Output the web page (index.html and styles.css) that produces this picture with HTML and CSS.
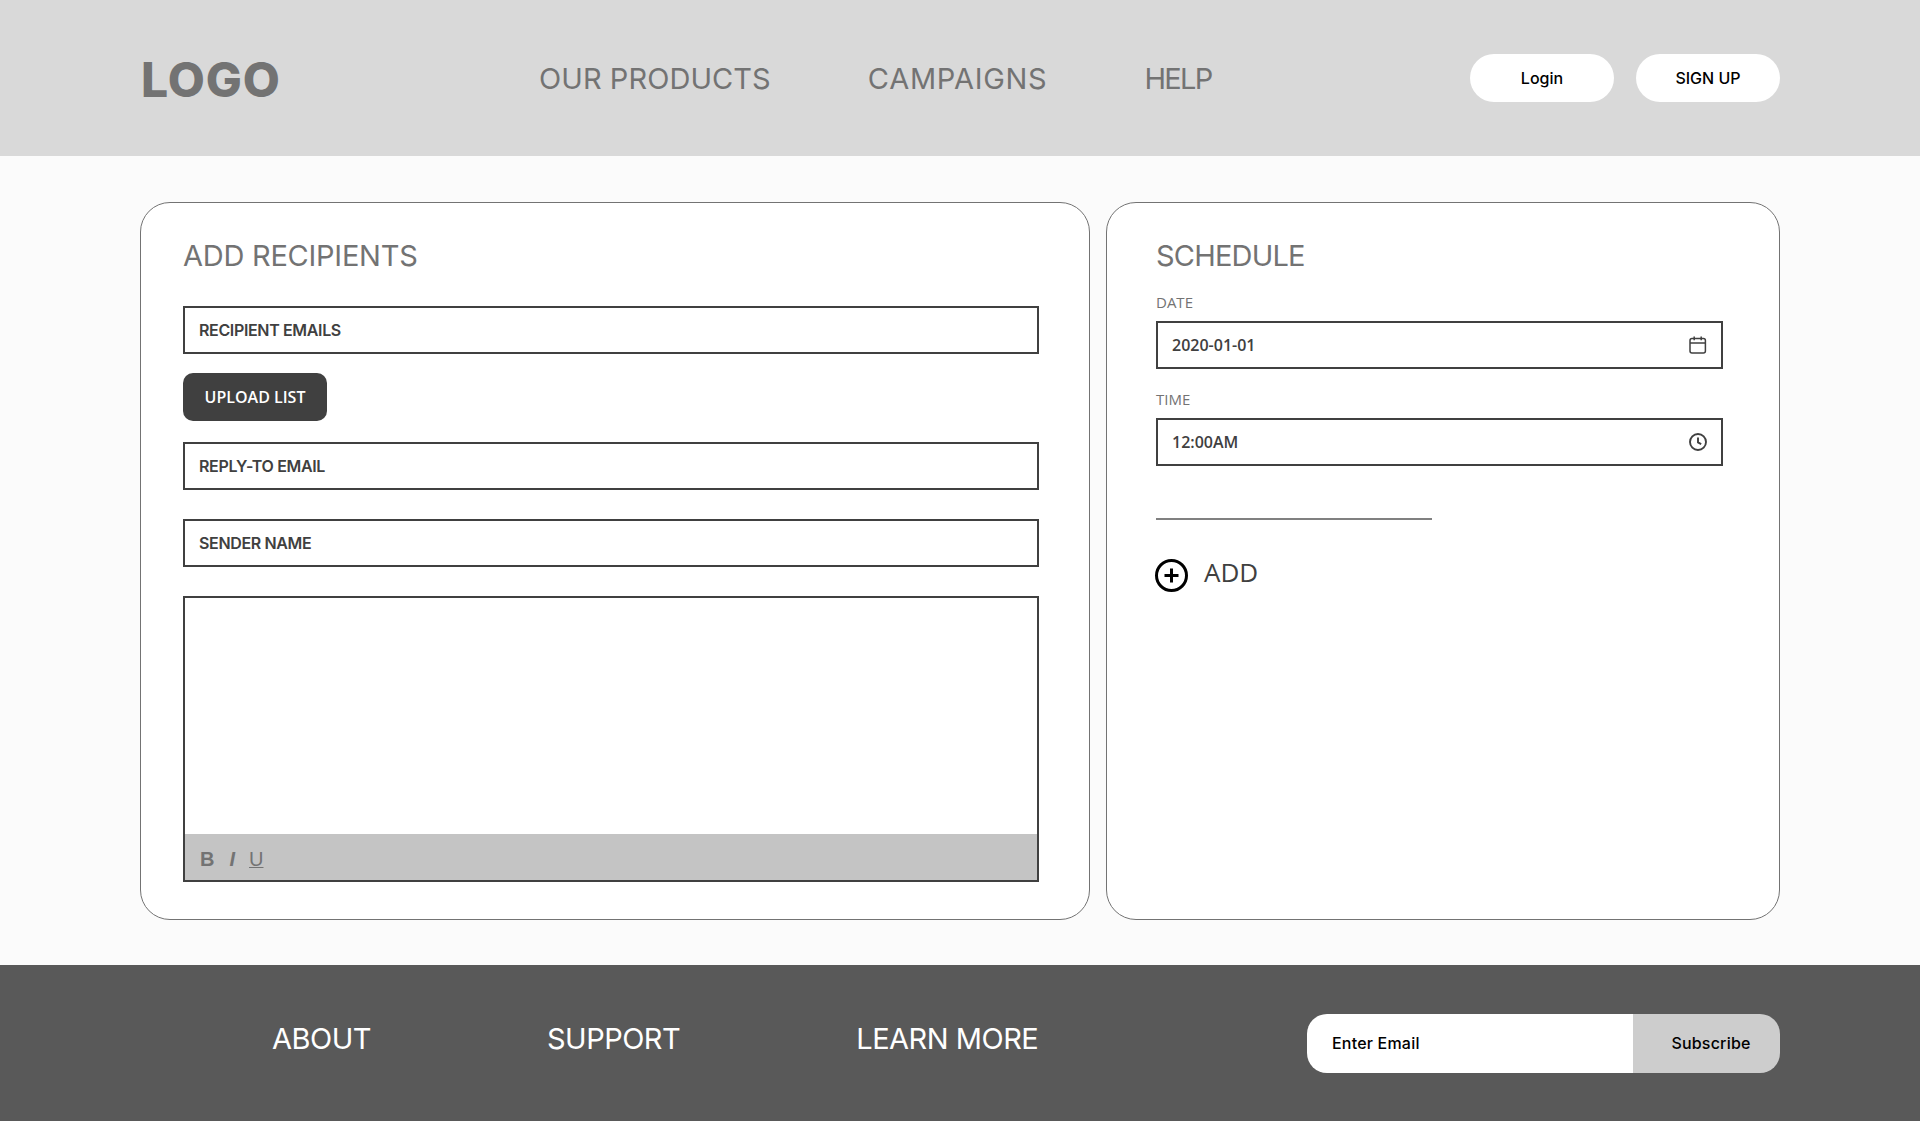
FILE: index.html
```html
<!DOCTYPE html>
<html lang="en">
<head>
  <meta charset="UTF-8" />
  <title>New Campaign</title>
  <link rel="stylesheet" href="styles.css">
</head>
<body>
  <header class="site-header">
    <div class="logo">LOGO</div>
    <nav class="main-nav">
      <a href="#" class="nav-products">OUR PRODUCTS</a>
      <a href="#" class="nav-campaigns">CAMPAIGNS</a>
      <a href="#" class="nav-help">HELP</a>
    </nav>
    <div class="header-buttons">
      <button type="button">Login</button>
      <button type="button">SIGN UP</button>
    </div>
  </header>

  <main class="content">
    <section class="card card-recipients">
      <h2>ADD RECIPIENTS</h2>
      <div class="field field-first">RECIPIENT EMAILS</div>
      <button type="button" class="upload-btn">UPLOAD LIST</button>
      <div class="field field-reply">REPLY-TO EMAIL</div>
      <div class="field field-spaced">SENDER NAME</div>
      <div class="editor field-spaced">
        <div class="editor-body"></div>
        <div class="editor-toolbar">
          <span class="tool-bold">B</span>
          <span class="tool-italic">I</span>
          <span class="tool-underline">U</span>
        </div>
      </div>
    </section>

    <section class="card card-schedule">
      <h2>SCHEDULE</h2>
      <label class="small-label label-date">DATE</label>
      <div class="value-field">
        <span>2020-01-01</span>
        <svg class="field-icon" viewBox="0 0 18 18" fill="none" stroke="#404040" stroke-width="1.5">
          <rect x="1" y="2.6" width="15.4" height="14.4" rx="2" />
          <path d="M1 7h15.4M5.2 0.6v3.6M12.2 0.6v3.6" />
        </svg>
      </div>
      <label class="small-label label-time">TIME</label>
      <div class="value-field">
        <span>12:00AM</span>
        <svg class="field-icon" viewBox="0 0 18 18" fill="none" stroke="#404040" stroke-width="1.9">
          <circle cx="9" cy="9" r="8" />
          <path d="M9 4.4V9.4l3.2 1.7" />
        </svg>
      </div>
      <div class="divider"></div>
      <div class="add-row">
        <svg class="add-icon" viewBox="0 0 33 33" fill="none" stroke="#000" stroke-width="3">
          <circle cx="16.5" cy="16.5" r="15" />
          <path d="M16.5 9.5v14M9.5 16.5h14" />
        </svg>
        <span>ADD</span>
      </div>
    </section>
  </main>

  <footer class="site-footer">
    <nav class="footer-nav">
      <a href="#">ABOUT</a>
      <a href="#">SUPPORT</a>
      <a href="#">LEARN MORE</a>
    </nav>
    <form class="subscribe">
      <div class="subscribe-input">Enter Email</div>
      <button type="button">Subscribe</button>
    </form>
  </footer>
</body>
</html>
```

FILE: styles.css
```css
* {
  margin: 0;
  padding: 0;
  box-sizing: border-box;
}

body {
  font-family: 'Inter', sans-serif;
  background: #fbfbfb;
  width: 1920px;
}

a {
  text-decoration: none;
}

/* header */
.site-header {
  height: 156px;
  background: #d9d9d9;
  padding: 0 140px;
  display: flex;
  align-items: center;
}

.logo {
  width: 139px;
  padding-left: 1px;
  padding-top: 4px;
  font-size: 48px;
  font-weight: 800;
  color: #737373;
  letter-spacing: 0.9px;
  line-height: 1;
  white-space: nowrap;
}

.main-nav {
  margin-left: 260px;
  display: flex;
  gap: 97px;
}

.main-nav a {
  font-size: 29px;
  font-weight: 400;
  color: #737373;
}

.nav-products {
  letter-spacing: 0.07px;
}

.nav-campaigns {
  letter-spacing: 0.73px;
}

.nav-help {
  letter-spacing: -1.7px;
}

.header-buttons {
  margin-left: auto;
  display: flex;
  gap: 22px;
}

.header-buttons button {
  width: 144px;
  height: 48px;
  border: none;
  border-radius: 24px;
  background: #fff;
  color: #000;
  font-family: 'Inter', sans-serif;
  font-size: 16px;
  font-weight: 500;
}

/* cards */
.content {
  padding: 46px 140px 45px;
  display: flex;
  gap: 16px;
}

.card {
  height: 718px;
  background: #fff;
  border: 1px solid #737373;
  border-radius: 30px;
  padding-top: 32px;
  display: flex;
  flex-direction: column;
  align-items: flex-start;
}

.card h2 {
  height: 42px;
  font-size: 29px;
  line-height: 42px;
  font-weight: 400;
  color: #737373;
}

.card-recipients {
  width: 950px;
  padding-left: 42px;
  padding-right: 50px;
}

.card-recipients h2 {
  letter-spacing: -0.25px;
}

.card-schedule {
  width: 674px;
  padding-left: 49px;
  padding-right: 56px;
}

.card-schedule h2 {
  letter-spacing: -0.8px;
}

.field {
  width: 100%;
  height: 48px;
  flex-shrink: 0;
  border: 2px solid #404040;
  padding-left: 14px;
  display: flex;
  align-items: center;
  font-size: 16px;
  font-weight: 600;
  color: #404040;
  letter-spacing: -0.35px;
}

.field-first {
  margin-top: 29px;
}

.field-reply {
  margin-top: 21px;
}

.field-spaced {
  margin-top: 29px;
}

.upload-btn {
  width: 144px;
  height: 48px;
  flex-shrink: 0;
  margin-top: 19px;
  border: none;
  border-radius: 10px;
  background: #404040;
  color: #fff;
  font-family: 'Open Sans', sans-serif;
  font-size: 16px;
  font-weight: 600;
}

.editor {
  width: 100%;
  height: 286px;
  border: 2px solid #404040;
  display: flex;
  flex-direction: column;
}

.editor-body {
  flex: 1;
}

.editor-toolbar {
  height: 46px;
  background: #c4c4c4;
  padding-left: 15px;
  padding-top: 4px;
  display: flex;
  align-items: center;
  font-family: 'Liberation Sans', sans-serif;
  font-size: 20px;
  color: #737373;
}

.tool-bold {
  font-weight: 700;
  margin-right: 15px;
}

.tool-italic {
  font-weight: 700;
  font-style: italic;
  margin-right: 14px;
}

.tool-underline {
  text-decoration: underline;
  text-decoration-thickness: 1px;
}

/* schedule */
.small-label {
  height: 22px;
  line-height: 22px;
  margin-bottom: 8px;
  font-family: 'Open Sans', sans-serif;
  font-size: 15px;
  color: #737373;
}

.label-date {
  margin-top: 14px;
}

.label-time {
  margin-top: 19px;
}

.value-field {
  width: 567px;
  height: 48px;
  flex-shrink: 0;
  border: 2px solid #404040;
  padding: 0 14px;
  display: flex;
  align-items: center;
  justify-content: space-between;
  font-family: 'Open Sans', sans-serif;
  font-size: 16px;
  font-weight: 600;
  color: #404040;
}

.field-icon {
  width: 18px;
  height: 18px;
}

.divider {
  width: 276px;
  height: 2px;
  margin-top: 52px;
  background: #808080;
}

.add-row {
  margin-top: 39px;
  margin-left: -1px;
  display: flex;
  align-items: flex-start;
  gap: 16px;
  font-family: 'Open Sans', sans-serif;
  font-size: 26px;
  line-height: 26px;
  color: #404040;
}

.add-icon {
  width: 33px;
  height: 33px;
}

/* footer */
.site-footer {
  height: 156px;
  background: #595959;
  display: flex;
  align-items: flex-start;
  justify-content: space-between;
  padding: 0 140px 0 272px;
}

.footer-nav {
  margin-top: 56px;
  display: flex;
  gap: 176px;
}

.footer-nav a {
  font-size: 29px;
  font-weight: 400;
  color: #fff;
  letter-spacing: -0.5px;
}

.subscribe {
  width: 473px;
  height: 59px;
  margin-top: 49px;
  border-radius: 20px;
  overflow: hidden;
  display: flex;
}

.subscribe-input {
  flex: 1;
  background: #fff;
  color: #000;
  padding-left: 25px;
  padding-bottom: 2px;
  display: flex;
  align-items: center;
  font-size: 16px;
  font-weight: 500;
  letter-spacing: 0.2px;
}

.subscribe button {
  width: 147px;
  border: none;
  background: #cdcdcd;
  color: #000;
  padding-left: 9px;
  padding-bottom: 2px;
  font-family: 'Inter', sans-serif;
  font-size: 16px;
  font-weight: 500;
  letter-spacing: 0.2px;
}
```
